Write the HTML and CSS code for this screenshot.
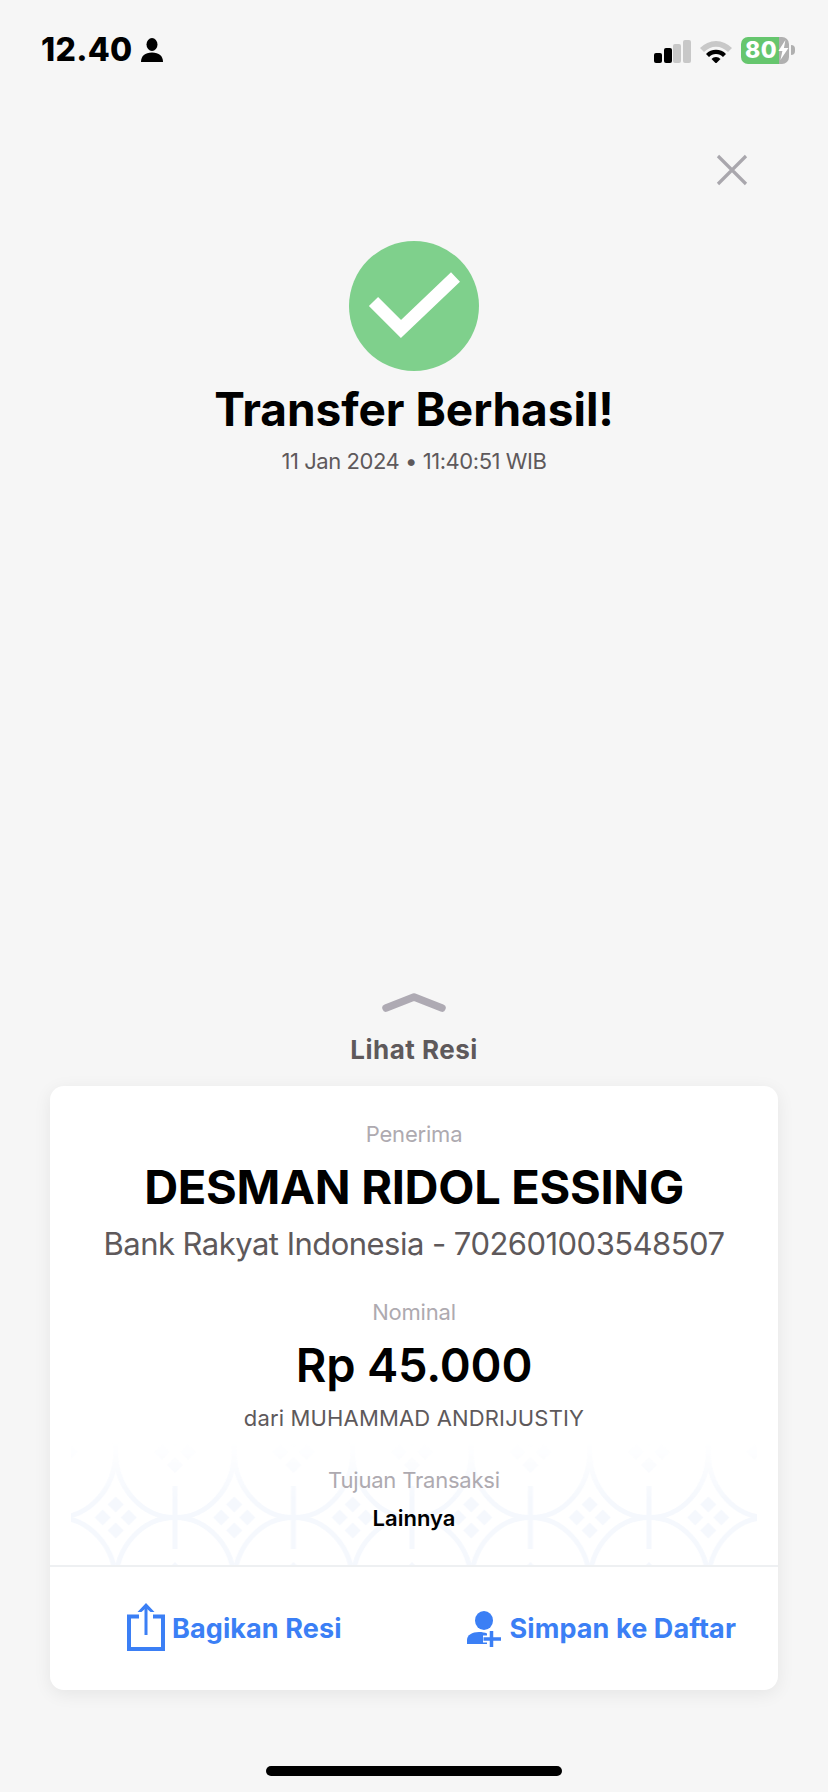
FILE: index.html
```html
<!DOCTYPE html>
<html lang="id">
<head>
<meta charset="utf-8">
<title>Transfer Berhasil</title>
<link rel="stylesheet" href="styles.css">
</head>
<body>
<div class="screen">
  <header class="status">
    <div class="status-left">
      <span class="clock">12.40</span>
      <svg class="person" viewBox="0 0 22 24"><ellipse cx="11" cy="6.500" rx="5.500" ry="6.500"/><path d="M0 24c0-6 4-9.500 11-9.500S22 18 22 24z"/></svg>
    </div>
    <div class="status-right">
      <svg class="signal" viewBox="0 0 37 23"><rect x="0" y="13" width="8" height="10" rx="2" fill="#000"/><rect x="10" y="8" width="8" height="15" rx="2" fill="#000"/><rect x="19" y="4" width="8" height="19" rx="2" fill="#c8c8c8"/><rect x="29" y="0" width="8" height="23" rx="2" fill="#c8c8c8"/></svg>
      <svg class="wifi" viewBox="0 0 32 24"><path d="M0 9a22 22 0 0 1 32 0l-4 4a16.500 16.500 0 0 0-24 0z" fill="#c8c8c8"/><path d="M6 15a14 14 0 0 1 20 0l-3 3a9.500 9.500 0 0 0-14 0z" fill="#000"/><path d="M11.500 20a6 6 0 0 1 9 0l-4.500 4.500z" fill="#000"/></svg>
      <div class="battery">
        <div class="battery-body"><span class="battery-text">80</span><svg class="bolt" viewBox="0 0 10 20"><path d="M7 0 0 11h4l-2 9 8-12H5.500z"/></svg></div>
        <span class="battery-cap"></span>
      </div>
    </div>
  </header>

  <div class="close-row">
    <svg class="close" viewBox="0 0 32 32"><path d="M2 2l28 28M30 2 2 30"/></svg>
  </div>

  <section class="result">
    <svg class="check" viewBox="0 0 130 130"><circle cx="65" cy="65" r="65" fill="#7fd08c"/><path d="M24.500 60.500 52 88 106.500 36" fill="none" stroke="#fff" stroke-width="13"/></svg>
    <h1 class="title">Transfer Berhasil!</h1>
    <p class="date">11 Jan 2024 • 11:40:51 WIB</p>
  </section>

  <div class="receipt-toggle">
    <svg class="chevron" viewBox="0 0 64 19"><path d="M4 15 32 4l28 11" fill="none" stroke="#aeaab3" stroke-width="7.500" stroke-linecap="round" stroke-linejoin="round"/></svg>
    <span class="toggle-label">Lihat Resi</span>
  </div>

  <section class="card">
    <div class="card-body">
      <svg class="pattern" width="686" height="130" viewBox="0 0 686 130">
        <defs>
          <linearGradient id="fade" x1="0" y1="0" x2="0" y2="1"><stop offset="0.05" stop-color="#fff" stop-opacity="0"/><stop offset="0.5" stop-color="#fff" stop-opacity="1"/></linearGradient>
          <g id="cluster" fill="#f5f8fd"><path d="M0-21l8 8-8 8-8-8zM13-8l8 8-8 8-8-8zM0 5l8 8-8 8-8-8zM-13-8l8 8-8 8-8-8z"/></g>
          <pattern id="kawung" x="104" y="17" width="118.500" height="131" patternUnits="userSpaceOnUse">
            <g fill="none" stroke="#f5f8fd" stroke-width="5">
              <ellipse cx="0" cy="0" rx="59.250" ry="65.500"/><ellipse cx="118.500" cy="0" rx="59.250" ry="65.500"/><ellipse cx="0" cy="131" rx="59.250" ry="65.500"/><ellipse cx="118.500" cy="131" rx="59.250" ry="65.500"/>
              <path d="M0 34V97M118.500 34V97"/>
            </g>
            <use href="#cluster" x="59.250" y="65.500"/><use href="#cluster" x="0" y="0"/><use href="#cluster" x="118.500" y="0"/><use href="#cluster" x="0" y="131"/><use href="#cluster" x="118.500" y="131"/>
          </pattern>
          <mask id="fadeMask"><rect width="686" height="130" fill="url(#fade)"/></mask>
        </defs>
        <rect width="686" height="130" fill="url(#kawung)" mask="url(#fadeMask)"/>
      </svg>
      <div class="field">
        <span class="label">Penerima</span>
        <strong class="name">DESMAN RIDOL ESSING</strong>
        <span class="account">Bank Rakyat Indonesia - 702601003548507</span>
      </div>
      <div class="field field-amount">
        <span class="label">Nominal</span>
        <strong class="amount">Rp 45.000</strong>
        <span class="source">dari MUHAMMAD ANDRIJUSTIY</span>
      </div>
      <div class="field field-purpose">
        <span class="label">Tujuan Transaksi</span>
        <span class="purpose">Lainnya</span>
      </div>
    </div>
    <footer class="actions">
      <div class="action">
        <svg class="icon-share" viewBox="0 0 38 48"><path d="M12 13.500H2V46h34V13.500H26" fill="none" stroke="#3b7ff5" stroke-width="4"/><path d="M19 32V3" fill="none" stroke="#3b7ff5" stroke-width="3"/><path d="M19 0l8.500 9h-4L19 5l-4.500 4h-4z" fill="#3b7ff5"/></svg>
        <span>Bagikan Resi</span>
      </div>
      <div class="action">
        <svg class="icon-add" viewBox="0 0 34 36"><ellipse cx="17" cy="9.500" rx="9" ry="9.500" fill="#3b7ff5"/><path d="M0 33v-4c0-5 5-8 12-8 3 0 6 .5 8 1.500V33z" fill="#3b7ff5"/><path d="M24.500 20v16M16 28h18" stroke="#fff" stroke-width="7"/><path d="M24.500 20v16M16.500 28H34" stroke="#3b7ff5" stroke-width="3.500"/></svg>
        <span>Simpan ke Daftar</span>
      </div>
    </footer>
  </section>

  <div class="home-indicator"></div>
</div>
</body>
</html>
```
FILE: styles.css
```css
* { box-sizing: border-box; margin: 0; padding: 0; }
html, body { width: 828px; height: 1792px; overflow: hidden; }
body { background: #f6f6f6; font-family: Inter, "Liberation Sans", sans-serif; color: #000; }
.screen { width: 828px; height: 1792px; display: flex; flex-direction: column; }

.status { display: flex; justify-content: space-between; align-items: center; height: 42px; margin-top: 29px; padding: 0 33px 0 41px; }
.status-left { display: flex; align-items: center; gap: 9px; }
.clock { font-size: 32px; font-weight: 800; line-height: 42px; letter-spacing: 0.3px; }
.person { width: 22px; height: 24px; fill: #000; }
.status-right { display: flex; align-items: center; gap: 9px; }
.signal { width: 37px; height: 23px; margin-top: 3px; }
.wifi { width: 32px; height: 24px; margin-top: 2px; }
.battery { display: flex; align-items: center; }
.battery-body { width: 48px; height: 27px; border-radius: 7px; background: linear-gradient(90deg, #66c66e 38px, #b0b0b0 38px); display: flex; align-items: center; padding-left: 4px; }
.battery-text { font-size: 23px; font-weight: 800; color: #fff; line-height: 27px; letter-spacing: 0.5px; }
.bolt { width: 11px; height: 20px; fill: #fff; margin-left: 1px; }
.battery-cap { width: 4px; height: 10px; background: #b0b0b0; border-radius: 0 4px 4px 0; margin-left: 2px; }

.close-row { display: flex; justify-content: flex-end; margin-top: 83px; padding-right: 80px; }
.close { width: 32px; height: 32px; fill: none; stroke: #a9a7ad; stroke-width: 3.200; }

.result { display: flex; flex-direction: column; align-items: center; margin-top: 55px; }
.check { width: 130px; height: 130px; display: block; }
.title { font-size: 46px; font-weight: 700; line-height: 54px; margin-top: 11px; letter-spacing: -0.05px; }
.date { font-size: 22px; font-weight: 400; line-height: 28px; margin-top: 11px; color: #5e595b; letter-spacing: -0.45px; }

.receipt-toggle { display: flex; flex-direction: column; align-items: center; margin-top: 518px; }
.chevron { width: 64px; height: 19px; display: block; }
.toggle-label { font-size: 26px; font-weight: 700; line-height: 30px; margin-top: 23px; color: #5e595b; letter-spacing: 0.5px; }

.card { margin: 21px 50px 0; height: 604px; background: #fff; border-radius: 14px; box-shadow: 0 4px 18px rgba(0,0,0,0.07); display: flex; flex-direction: column; overflow: hidden; }
.card-body { height: 481px; position: relative; display: flex; flex-direction: column; align-items: center; padding-top: 33px; border-bottom: 2px solid #eef0f2; text-align: center; }
.pattern { position: absolute; left: 21px; bottom: 0; }
.field { position: relative; display: flex; flex-direction: column; align-items: center; }
.label { font-size: 22px; line-height: 30px; color: #aeaab0; letter-spacing: -0.2px; }
.name { font-size: 47px; font-weight: 700; line-height: 54px; margin-top: 11px; letter-spacing: -0.3px; }
.account { font-size: 31px; line-height: 38px; margin-top: 11px; color: #5e595b; letter-spacing: -0.53px; }
.field-amount { margin-top: 34px; }
.amount { font-size: 47px; font-weight: 600; line-height: 54px; margin-top: 11px; letter-spacing: -0.2px; }
.source { font-size: 22px; line-height: 28px; margin-top: 12px; color: #5e595b; letter-spacing: 0.15px; }
.field-purpose { margin-top: 33px; }
.purpose { font-size: 22px; font-weight: 600; line-height: 28px; margin-top: 9px; }

.actions { flex: 1; display: flex; justify-content: space-between; align-items: center; padding: 0 42px 0 77px; }
.action { display: flex; align-items: center; gap: 7px; font-size: 27px; font-weight: 700; color: #3b7ff5; letter-spacing: 0.1px; }
.icon-share { width: 38px; height: 48px; margin-top: -4px; }
.icon-add { width: 34px; height: 36px; margin-right: 2px; }

.home-indicator { width: 296px; height: 10px; border-radius: 5px; background: #000; margin: 76px auto 0; }
```
